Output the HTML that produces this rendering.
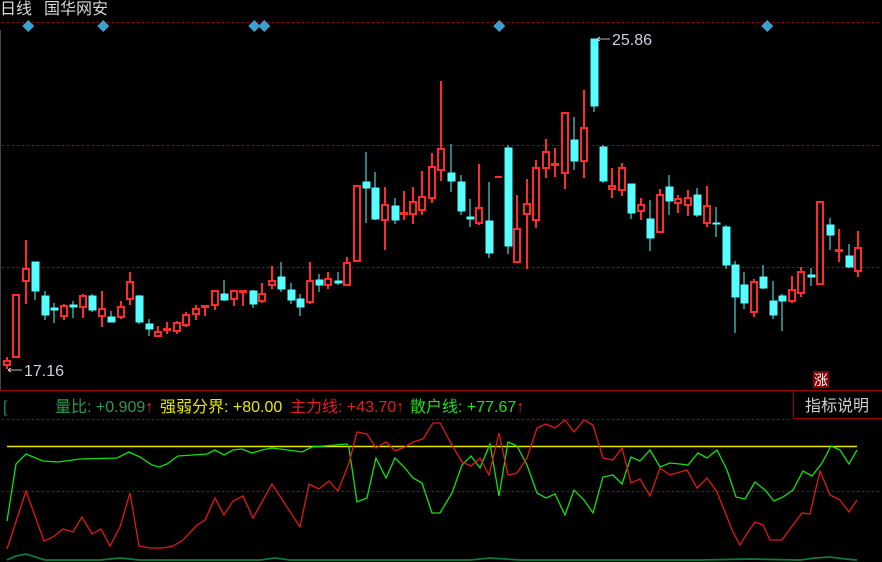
<!DOCTYPE html>
<html><head><meta charset="utf-8"><style>
html,body{margin:0;padding:0;background:#000;width:882px;height:562px;overflow:hidden}
svg{position:absolute;left:0;top:0}
.t{font-family:"Liberation Sans","Noto Sans CJK SC",sans-serif}
</style></head><body>
<svg width="882" height="562" xmlns="http://www.w3.org/2000/svg" shape-rendering="crispEdges">
<rect width="882" height="562" fill="#000"/>
<g stroke="#b00000" stroke-dasharray="2,3" stroke-width="1">
<line x1="2" y1="22.5" x2="882" y2="22.5"/>
<line x1="2" y1="145.5" x2="882" y2="145.5"/>
<line x1="2" y1="267.5" x2="882" y2="267.5"/>
<line x1="2" y1="419.5" x2="790" y2="419.5"/>
<line x1="2" y1="491.5" x2="882" y2="491.5"/>
</g>
<line x1="0" y1="390.5" x2="882" y2="390.5" stroke="#a00000"/>
<line x1="0.5" y1="30" x2="0.5" y2="390" stroke="#444"/>
<text x="0" y="14" class="t" font-size="16" fill="#d8d8d8">日线</text>
<text x="44" y="14" class="t" font-size="16" fill="#d8d8d8">国华网安</text>
<g fill="#3aa0d0">
<path d="M28 20l6 6-6 6-6-6z"/><path d="M103 20l6 6-6 6-6-6z"/><path d="M254 20l6 6-6 6-6-6z"/><path d="M264 20l6 6-6 6-6-6z"/><path d="M499 20l6 6-6 6-6-6z"/><path d="M767 20l6 6-6 6-6-6z"/>
</g>
<g stroke="#ff2a2a" stroke-width="2" fill="#000">
<path d="M7 357V369M16 295V357M26 240V304M64 304V320M83 294V318M102 291V327M121 301V319M130 272V305M158 326V337M167 322V334M177 321V334M186 312V327M196 305V320M205 305V316M215 290V310M234 290V306M243 290V306M262 283V303M272 266V289M310 262V304M328 272V289M347 257V285M357 186V261M385 187V250M404 191V220M413 187V224M422 171V215M432 153V203M441 81V181M479 164V225M517 195V263M527 179V269M536 160V228M546 139V178M555 148V177M565 112V189M584 90V178M612 168V198M622 163V196M641 198V220M660 189V232M678 195V213M688 190V216M707 186V227M754 279V317M792 276V303M801 267V297M820 202V284M839 229V262M858 231V277"/>
<rect x="4" y="361" width="6" height="4"/><rect x="13" y="295" width="6" height="62"/><rect x="23" y="269" width="6" height="12"/><rect x="61" y="306" width="6" height="10"/><rect x="80" y="296" width="6" height="11"/><rect x="99" y="309" width="6" height="7"/><rect x="118" y="307" width="6" height="10"/><rect x="127" y="282" width="6" height="17"/><rect x="155" y="332" width="6" height="4"/><rect x="164" y="329" width="6" height="1"/><rect x="174" y="323" width="6" height="8"/><rect x="183" y="315" width="6" height="10"/><rect x="193" y="309" width="6" height="5"/><rect x="202" y="306" width="6" height="1"/><rect x="212" y="291" width="6" height="14"/><rect x="231" y="291" width="6" height="8"/><rect x="240" y="291" width="6" height="1"/><rect x="259" y="294" width="6" height="7"/><rect x="269" y="281" width="6" height="4"/><rect x="307" y="281" width="6" height="21"/><rect x="325" y="279" width="6" height="6"/><rect x="344" y="263" width="6" height="22"/><rect x="354" y="186" width="6" height="75"/><rect x="382" y="205" width="6" height="15"/><rect x="401" y="213" width="6" height="1"/><rect x="410" y="202" width="6" height="12"/><rect x="419" y="197" width="6" height="13"/><rect x="429" y="167" width="6" height="31"/><rect x="438" y="149" width="6" height="21"/><rect x="476" y="208" width="6" height="15"/><rect x="514" y="229" width="6" height="33"/><rect x="524" y="204" width="6" height="10"/><rect x="533" y="168" width="6" height="52"/><rect x="543" y="152" width="6" height="16"/><rect x="552" y="164" width="6" height="1"/><rect x="562" y="113" width="6" height="60"/><rect x="581" y="128" width="6" height="33"/><rect x="609" y="186" width="6" height="3"/><rect x="619" y="168" width="6" height="22"/><rect x="638" y="205" width="6" height="6"/><rect x="657" y="195" width="6" height="37"/><rect x="675" y="199" width="6" height="4"/><rect x="685" y="198" width="6" height="7"/><rect x="704" y="206" width="6" height="17"/><rect x="751" y="282" width="6" height="30"/><rect x="789" y="290" width="6" height="11"/><rect x="798" y="272" width="6" height="21"/><rect x="817" y="202" width="6" height="82"/><rect x="836" y="250" width="6" height="1"/><rect x="855" y="248" width="6" height="23"/>
<path d="M495 177H502"/>
</g>
<g stroke="#55ffff" stroke-width="1.4" fill="#55ffff">
<path d="M35 262V300M45 291V320M54 303V323M73 301V318M92 294V312M111 311V322M139 295V324M149 319V336M224 280V301M253 290V308M281 262V292M291 283V304M300 294V316M319 274V292M338 272V285M366 152V223M375 172V220M395 198V224M451 144V192M461 175V215M470 199V227M489 182V258M508 145V254M574 117V170M594 39V112M603 145V183M631 184V219M650 200V251M669 175V215M697 188V217M716 207V237M726 225V269M735 261V333M744 272V309M763 265V289M773 281V319M782 294V331M811 268V286M830 218V250M849 244V268"/>
<rect x="32" y="262" width="7" height="29"/><rect x="42" y="296" width="7" height="19"/><rect x="51" y="308" width="7" height="2"/><rect x="70" y="305" width="7" height="2"/><rect x="89" y="296" width="7" height="14"/><rect x="108" y="317" width="7" height="5"/><rect x="136" y="296" width="7" height="26"/><rect x="146" y="324" width="7" height="5"/><rect x="221" y="294" width="7" height="6"/><rect x="250" y="291" width="7" height="13"/><rect x="278" y="277" width="7" height="12"/><rect x="288" y="290" width="7" height="10"/><rect x="297" y="299" width="7" height="8"/><rect x="316" y="280" width="7" height="5"/><rect x="335" y="281" width="7" height="2"/><rect x="363" y="182" width="7" height="6"/><rect x="372" y="188" width="7" height="31"/><rect x="392" y="206" width="7" height="14"/><rect x="448" y="173" width="7" height="8"/><rect x="458" y="182" width="7" height="29"/><rect x="467" y="217" width="7" height="2"/><rect x="486" y="221" width="7" height="32"/><rect x="505" y="148" width="7" height="98"/><rect x="571" y="140" width="7" height="21"/><rect x="591" y="39" width="7" height="67"/><rect x="600" y="147" width="7" height="34"/><rect x="628" y="184" width="7" height="29"/><rect x="647" y="219" width="7" height="19"/><rect x="666" y="187" width="7" height="14"/><rect x="694" y="195" width="7" height="20"/><rect x="713" y="223" width="7" height="1"/><rect x="723" y="227" width="7" height="38"/><rect x="732" y="265" width="7" height="32"/><rect x="741" y="285" width="7" height="18"/><rect x="760" y="277" width="7" height="11"/><rect x="770" y="301" width="7" height="14"/><rect x="779" y="296" width="7" height="5"/><rect x="808" y="275" width="7" height="2"/><rect x="827" y="225" width="7" height="10"/><rect x="846" y="256" width="7" height="11"/>
</g>
<g stroke="#bbb" stroke-width="1"><path d="M8 370H22M8 370l3-2M8 370l3 2M597 39H610M597 39l3-2M597 39l3 2"/></g>
<text x="24" y="376" class="t" font-size="16" fill="#c8d0e0">17.16</text>
<text x="612" y="45" class="t" font-size="16" fill="#c8d0e0">25.86</text>
<rect x="813" y="371" width="16" height="17" fill="#8a0000"/>
<text x="814" y="385" class="t" font-size="14" fill="#fff">涨</text>
<path d="M793.5 391V418.5H882" stroke="#a00000" fill="none"/>
<text x="805" y="411" class="t" font-size="16" fill="#cfcfcf">指标说明</text>
<text x="3" y="412" class="t" font-size="16" fill="#2a8a5a">[</text>
<text x="55" y="412" class="t" font-size="16" fill="#2e9a4a">量比: +0.909<tspan fill="#e03030">↑</tspan></text>
<text x="160" y="412" class="t" font-size="16" fill="#e8e800">强弱分界: +80.00</text>
<text x="290" y="412" class="t" font-size="16" fill="#e02020">主力线: +43.70↑</text>
<text x="410" y="412" class="t" font-size="16" fill="#22dd22">散户线: +77.67<tspan fill="#e03030">↑</tspan></text>
<g fill="none" stroke-width="1.3" shape-rendering="auto">
<line x1="7" y1="446.5" x2="857" y2="446.5" stroke="#e6e600" stroke-width="1.6"/>
<polyline stroke="#10e010" points="7,521 16,464 26,454 43,461 58,462 80,459 117,458 129,452 140,457 152,465 159,467 167,464 178,456 207,454 215,450 224,455 233,450 242,449 252,453 262,450 272,448 288,450 302,452 312,447 347,444 349,448 357,502 367,498 376,458 386,478 395,458 405,468 413,478 422,483 432,513 440,513 452,493 462,465 471,456 480,468 490,444 499,496 508,442 517,446 527,465 537,493 546,498 555,494 565,515 574,490 584,500 593,513 603,477 613,475 622,484 631,457 640,461 650,450 660,467 670,463 680,464 688,465 698,453 707,458 717,450 727,470 736,497 745,499 755,482 765,490 774,501 783,497 793,490 803,471 812,476 822,463 831,446 840,450 849,464 857,450"/>
<polyline stroke="#e01818" points="7,549 26,491 44,541 53,537 63,529 73,532 82,517 92,534 101,529 110,546 120,527 130,493 139,546 150,548 163,548 173,546 183,540 197,525 205,520 215,498 224,515 233,501 243,496 253,518 272,484 300,527 309,484 319,489 329,481 338,491 349,463 357,432 367,434 376,448 386,442 395,451 405,447 413,442 423,439 433,423 440,423 452,445 462,462 471,466 480,458 489,475 499,433 508,475 517,473 527,458 537,428 546,424 555,428 565,420 574,432 584,420 593,425 603,458 613,460 622,448 631,483 640,479 650,496 660,468 670,475 687,470 697,488 707,478 717,492 733,532 740,545 748,532 755,522 763,525 770,540 782,540 787,533 802,513 810,514 820,471 830,495 840,500 849,512 857,500"/>
<polyline stroke="#0c7a40" stroke-width="1.8" points="7,560 16,556 26,554 45,560 100,560 120,558 140,560 260,560 275,558 290,560 420,560 440,560 470,560 490,558 520,560 600,560 640,560 700,560 750,559 800,560 815,558 830,557 845,559 857,560"/>
</g>
</svg>
</body></html>
